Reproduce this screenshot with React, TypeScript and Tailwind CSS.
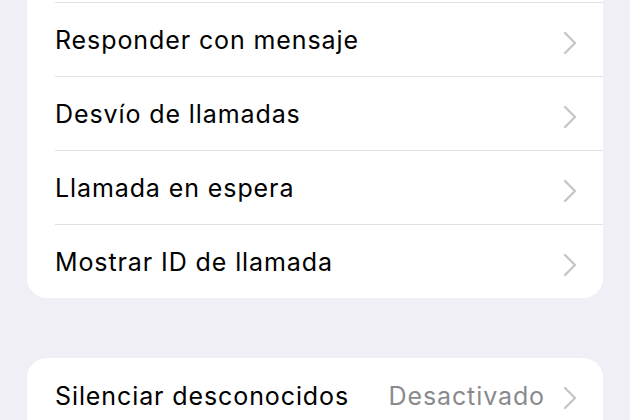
type Row = { label: string; value?: string };

const callRows: Row[] = [
  { label: "Responder con mensaje" },
  { label: "Desvío de llamadas" },
  { label: "Llamada en espera" },
  { label: "Mostrar ID de llamada" },
];

function Chevron() {
  return (
    <svg width="14" height="24" viewBox="0 0 14 24" fill="none" className="mt-[3px] shrink-0">
      <path d="M2 2 L12 12 L2 22" stroke="#c6c6ca" strokeWidth="2.4" strokeLinecap="round" strokeLinejoin="round" />
    </svg>
  );
}

function SettingsRow({ row }: { row: Row }) {
  return (
    <div className="pl-[28px]">
      <div className="flex h-[74px] items-center border-t border-[#e1e1e5] pr-[26px] pt-[3px]">
        <span className="flex-1 text-[25px] tracking-[0.9px] text-black">{row.label}</span>
        {row.value && (
          <span className="mr-[18px] text-[25px] tracking-[0.9px] text-[#8a8a8e]">{row.value}</span>
        )}
        <Chevron />
      </div>
    </div>
  );
}

export default function App() {
  return (
    <div
      className="h-[420px] w-[630px] overflow-hidden bg-[#f0eff5] px-[27px]"
      style={{ fontFamily: "Inter, 'Noto Sans', sans-serif" }}
    >
      <div className="rounded-b-[20px] bg-white pt-[2px]">
        {callRows.map((row) => (
          <SettingsRow key={row.label} row={row} />
        ))}
      </div>
      <div className="mt-[60px] h-[120px] rounded-t-[20px] bg-white">
        <div className="pl-[28px]">
          <div className="flex h-[74px] items-center pr-[26px] pt-[3px]">
            <span className="flex-1 text-[25px] tracking-[0.9px] text-black">Silenciar desconocidos</span>
            <span className="mr-[18px] text-[25px] tracking-[0.9px] text-[#8a8a8e]">Desactivado</span>
            <Chevron />
          </div>
        </div>
      </div>
    </div>
  );
}
